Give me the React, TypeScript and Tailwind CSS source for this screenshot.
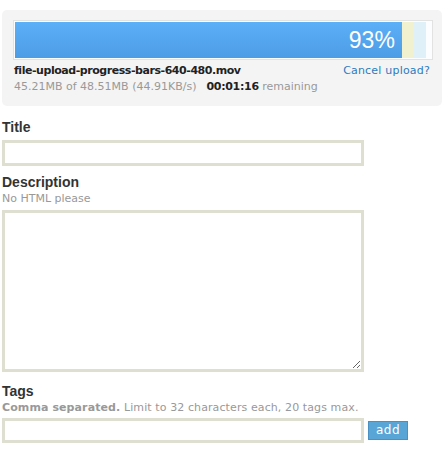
export default function App() {
  const small = { fontFamily: '"DejaVu Sans", Verdana, sans-serif' };
  const head = { fontFamily: '"Liberation Sans", Arial, sans-serif' };

  return (
    <div className="w-[444px] h-[459px] bg-white px-[2px] pt-[10px]">
      {/* upload progress panel */}
      <div className="w-[440px] h-[96px] rounded-[5px] bg-[#f4f4f4] pl-[11px] pr-[12px] pt-[10px]">
        <div className="flex h-[40px] w-[420px] border border-[#e2e2e2] bg-[#fbfdfe] p-px">
          <div
            className="flex items-center justify-end bg-gradient-to-b from-[#5cb0f7] to-[#4c9ce6] pr-[7px] text-[23px] text-white"
            style={{ ...head, width: '93%' }}
          >
            93%
          </div>
          <div className="w-[12px] bg-[#f1f1cf]" />
          <div className="w-[12px] bg-[#e0f0f8]" />
        </div>
        <div className="mt-[3px] flex items-start justify-between pl-px text-[11px]" style={small}>
          <div>
            <div className="font-bold leading-[15px] tracking-[-0.45px] text-[#222]">
              file-upload-progress-bars-640-480.mov
            </div>
            <div className="mt-px leading-[15px] text-[#999]">
              45.21MB of 48.51MB (44.91KB/s)
              <span className="ml-[10px] font-bold tracking-[-0.3px] text-[#222]">00:01:16</span> remaining
            </div>
          </div>
          <a className="leading-[15px] tracking-[0.2px] text-[#2e7bbd]">Cancel upload?</a>
        </div>
      </div>

      {/* title */}
      <div className="mt-[13px] text-[14px] font-bold leading-[17px] text-[#333]" style={head}>
        Title
      </div>
      <input className="mt-[4px] block h-[26px] w-[362px] border-[3px] border-[#dedfd0] bg-white outline-none" />

      {/* description */}
      <div className="mt-[8px] text-[14px] font-bold leading-[17px] text-[#333]" style={head}>
        Description
      </div>
      <div className="mt-px text-[11px] leading-[13px] text-[#999]" style={small}>
        No HTML please
      </div>
      <textarea className="mt-[5px] block h-[162px] w-[362px] resize-y border-[3px] border-[#dedfd0] bg-white outline-none" />

      {/* tags */}
      <div className="mt-[11px] text-[14px] font-bold leading-[17px] text-[#333]" style={head}>
        Tags
      </div>
      <div className="mt-px text-[11px] leading-[13px] tracking-[0.1px] text-[#999]" style={small}>
        <span className="font-bold">Comma separated.</span> Limit to 32 characters each, 20 tags max.
      </div>
      <div className="mt-[4px] flex items-start gap-[4px]">
        <input className="block h-[25px] w-[362px] border-[3px] border-[#dedfd0] bg-white outline-none" />
        <button
          className="mt-[3px] h-[19px] w-[40px] border border-[#4b90c2] bg-[#59a5d6] text-[12px] leading-[17px] tracking-[0.5px] text-white"
          style={small}
        >
          add
        </button>
      </div>
    </div>
  );
}
